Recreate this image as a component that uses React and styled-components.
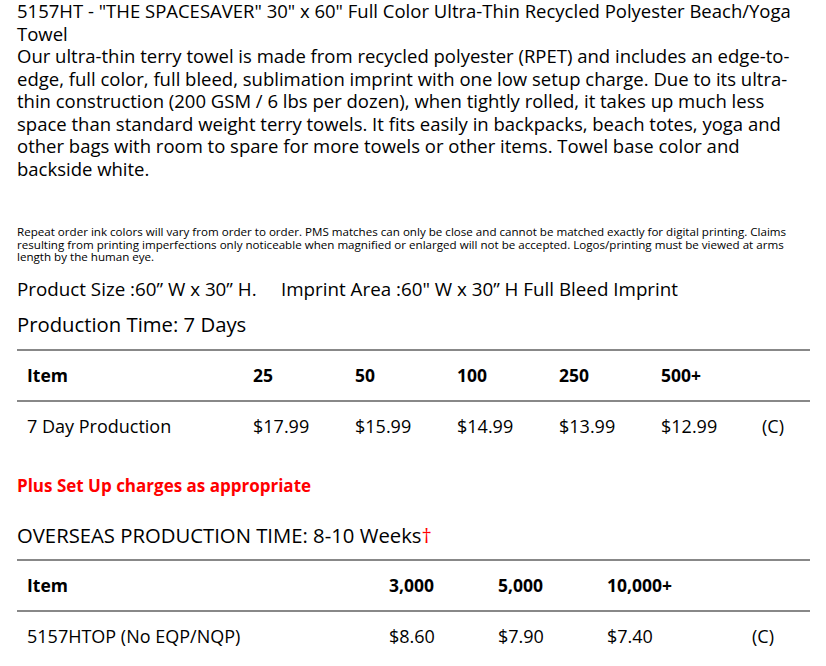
import React from "react"
import styled, { createGlobalStyle } from "styled-components"

const GlobalStyle = createGlobalStyle`
  body {
    margin: 0;
    background: #fff;
    color: #000;
    font-family: "Open Sans", Lato, sans-serif;
  }
`

const Page = styled.div`
  padding: 0 16px 0 17px;
`

const Title = styled.h1`
  margin: 0;
  font-size: 18.5px;
  font-weight: 400;
  line-height: 22.5px;
`

const Intro = styled.p`
  margin: 0;
  font-size: 18.5px;
  line-height: 22.5px;
`

const Disclaimer = styled.p`
  margin: 46px 0 0;
  font-size: 11.6px;
  line-height: 12.6px;
`

const SizeLine = styled.p`
  margin: 14px 0 0;
  font-size: 18.8px;
  line-height: 22px;
  white-space: pre;
`

const SectionTitle = styled.h2`
  margin: ${p => p.$top}px 0 0;
  font-size: 20.3px;
  font-weight: 400;
  line-height: 26px;
`

const Dagger = styled.span`
  color: #ff0000;
`

const Table = styled.div`
  margin-top: ${p => p.$top}px;
  border-top: 2px solid #888;
`

const Row = styled.div`
  display: grid;
  grid-template-columns: ${p => p.$cols};
  align-items: center;
  height: 49px;
  font-size: ${p => (p.$head ? 17.5 : 18)}px;
  font-weight: ${p => (p.$head ? 700 : 400)};
  border-bottom: ${p => (p.$head ? "2px solid #888" : "none")};
`

const Cell = styled.div`
  padding-left: 10px;
  white-space: nowrap;
`

const SetUp = styled.p`
  margin: 24px 0 0;
  font-size: 17px;
  line-height: 22px;
  font-weight: 700;
  color: #ff0000;
`

const domesticCols = "226px 102px 102px 102px 102px 101px 58px"
const overseasCols = "362px 109px 109px 145px 68px"

const domestic = {
  head: ["Item", "25", "50", "100", "250", "500+", ""],
  row: ["7 Day Production", "$17.99", "$15.99", "$14.99", "$13.99", "$12.99", "(C)"]
}

const overseas = {
  head: ["Item", "3,000", "5,000", "10,000+", ""],
  row: ["5157HTOP (No EQP/NQP)", "$8.60", "$7.90", "$7.40", "(C)"]
}

const PriceTable = ({ data, cols, top }) => (
  <Table $top={top}>
    <Row $head $cols={cols}>
      {data.head.map((c, i) => (
        <Cell key={i}>{c}</Cell>
      ))}
    </Row>
    <Row $cols={cols}>
      {data.row.map((c, i) => (
        <Cell key={i}>{c}</Cell>
      ))}
    </Row>
  </Table>
)

export default function App() {
  return (
    <Page>
      <GlobalStyle />
      <Title>
        5157HT - "THE SPACESAVER" 30" x 60" Full Color Ultra-Thin Recycled Polyester Beach/Yoga
        <br />
        Towel
      </Title>
      <Intro>
        Our ultra-thin terry towel is made from recycled polyester (RPET) and includes an edge-to-
        <br />
        edge, full color, full bleed, sublimation imprint with one low setup charge. Due to its ultra-
        <br />
        thin construction (200 GSM / 6 lbs per dozen), when tightly rolled, it takes up much less
        <br />
        space than standard weight terry towels. It fits easily in backpacks, beach totes, yoga and
        <br />
        other bags with room to spare for more towels or other items. Towel base color and
        <br />
        backside white.
      </Intro>
      <Disclaimer>
        Repeat order ink colors will vary from order to order. PMS matches can only be close and cannot be matched exactly for digital printing. Claims
        <br />
        resulting from printing imperfections only noticeable when magnified or enlarged will not be accepted. Logos/printing must be viewed at arms
        <br />
        length by the human eye.
      </Disclaimer>
      <SizeLine>{"Product Size :60\u201D W x 30\u201D H.     Imprint Area :60\" W x 30\u201D H Full Bleed Imprint"}</SizeLine>
      <SectionTitle $top={11}>Production Time: 7 Days</SectionTitle>
      <PriceTable data={domestic} cols={domesticCols} top={12} />
      <SetUp>Plus Set Up charges as appropriate</SetUp>
      <SectionTitle $top={25}>
        OVERSEAS PRODUCTION TIME: 8-10 Weeks<Dagger>†</Dagger>
      </SectionTitle>
      <PriceTable data={overseas} cols={overseasCols} top={11} />
    </Page>
  )
}
